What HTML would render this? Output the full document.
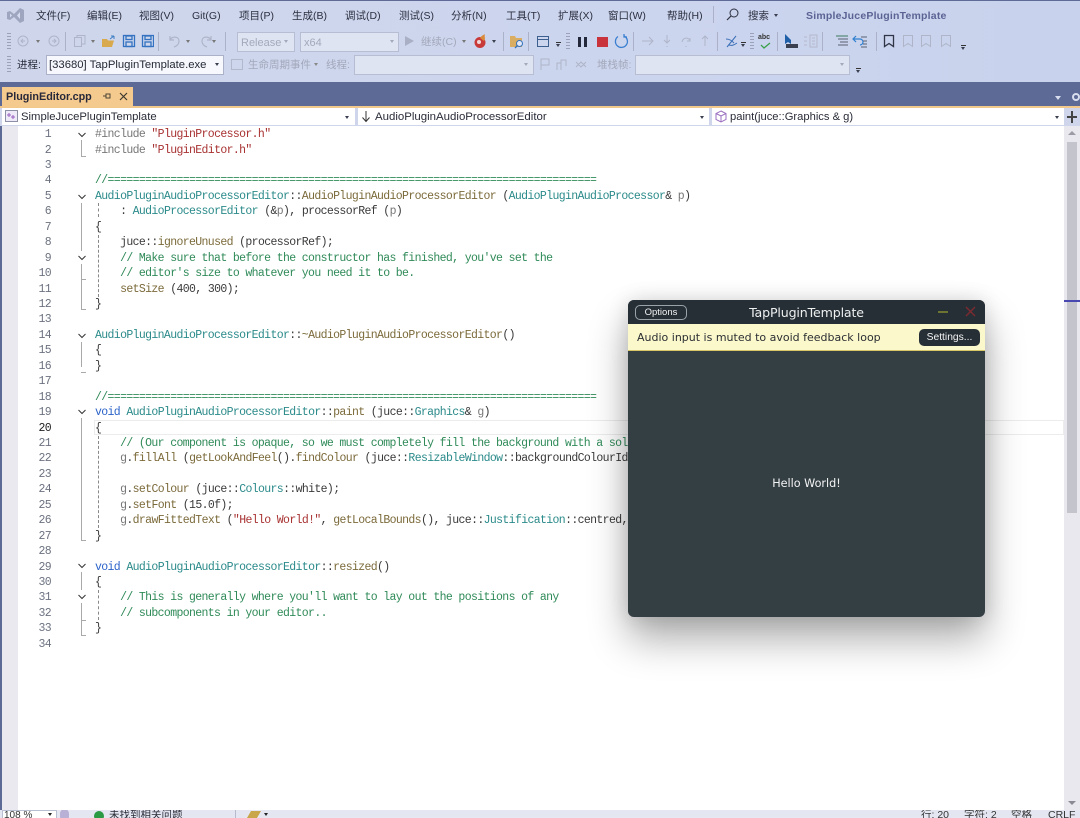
<!DOCTYPE html>
<html lang="zh"><head><meta charset="utf-8"><title>SimpleJucePluginTemplate</title>
<style>
html,body{margin:0;padding:0;width:1080px;height:818px;overflow:hidden;background:#fff}
body{position:relative;font-family:"Liberation Sans","Noto Sans CJK SC",sans-serif;color:#2a2d3a}
.a{position:absolute}
.m{position:absolute;top:9px;font-size:10.5px;line-height:14px;white-space:nowrap;color:#2c3040}
.t{position:absolute;white-space:nowrap;font-size:10.5px;line-height:14px}
.dis{color:#a3a9bb}
.box{position:absolute;box-sizing:border-box;border:1px solid #aeb5cc;background:#dfe4f2}
.caret{position:absolute;width:0;height:0;border-left:2.5px solid transparent;border-right:2.5px solid transparent;border-top:3px solid #3a3f50}
.caret.g{border-top-color:#a3a9bb}
.grip{position:absolute;width:4px;background:repeating-linear-gradient(#9aa1b8 0 1px,transparent 1px 3px)}
.sep{position:absolute;width:1px;background:#aab1c8}
.l{position:absolute;left:95px;white-space:pre;font-family:"Liberation Mono","DejaVu Sans Mono",monospace;font-size:11.5px;letter-spacing:-.635px;line-height:15px;color:#3a3a3a;transform:scaleY(1.08)}
.n{position:absolute;left:20px;width:31px;text-align:right;font-family:"Liberation Mono",monospace;font-size:11.5px;letter-spacing:-.66px;line-height:15px;color:#6c7280}
.c{color:#2f8a58}.k{color:#2b63c9}.s{color:#a83232}.y{color:#2b8a8a}.f{color:#7b6a3a}.p{color:#777}
.fold{position:absolute;left:78px;width:8px;height:8px}
.v{position:absolute;width:1px;background:#a9a9a9}
.d{position:absolute;left:98px;width:0;border-left:1px dashed #888}
.e{position:absolute;width:5px;height:1px;left:79px;background:#a9a9a9}
</style></head><body>

<!-- chrome background -->
<div class="a" style="left:0;top:0;width:1080px;height:82px;background:linear-gradient(90deg,#cfd6ec,#ccd5ee 60%,#c8d2ec)"></div>
<div class="a" style="left:0;top:0;width:1080px;height:1px;background:#5f6a96"></div>
<div class="a" style="left:0;top:82px;width:1080px;height:25px;background:#5d6a96"></div>
<div class="a" style="left:0;top:106px;width:1080px;height:2px;background:#f2c98a"></div>

<!-- VS logo -->
<svg class="a" style="left:6px;top:6px" width="20" height="19" viewBox="0 0 20 19"><path d="M1 6l3-1 4 3 6-6 4 2v11l-4 2-6-6-4 3-3-1z" fill="#9ea6bf"/><path d="M4 7.5v4l2-2zM14 6l-3 3.5 3 3.5z" fill="#d5dbef"/></svg>

<!-- menu -->
<span class="m" style="left:36px">文件(F)</span>
<span class="m" style="left:87px">编辑(E)</span>
<span class="m" style="left:139px">视图(V)</span>
<span class="m" style="left:192px">Git(G)</span>
<span class="m" style="left:239px">项目(P)</span>
<span class="m" style="left:292px">生成(B)</span>
<span class="m" style="left:345px">调试(D)</span>
<span class="m" style="left:399px">测试(S)</span>
<span class="m" style="left:451px">分析(N)</span>
<span class="m" style="left:506px">工具(T)</span>
<span class="m" style="left:558px">扩展(X)</span>
<span class="m" style="left:608px">窗口(W)</span>
<span class="m" style="left:667px">帮助(H)</span>
<div class="sep" style="left:713px;top:6px;height:17px"></div>
<svg class="a" style="left:725px;top:7px" width="15" height="15" viewBox="0 0 15 15"><circle cx="9" cy="6" r="4" fill="none" stroke="#2c3040"/><path d="M6 9l-4 4" stroke="#2c3040" stroke-width="1.2"/></svg>
<span class="m" style="left:748px">搜索</span><div class="caret" style="left:774px;top:14px"></div>
<span class="m" style="font-weight:bold;letter-spacing:.2px;color:#5b6394;font-size:10.5px;left:806px">SimpleJucePluginTemplate</span>

<!-- toolbar row 1 -->
<div class="grip" style="left:7px;top:33px;height:18px"></div>
<svg class="a" style="left:16px;top:34px" width="45" height="14" viewBox="0 0 45 14" fill="none" stroke="#aeb5c9"><circle cx="7" cy="7" r="5"/><path d="M9 7H5m2-2L5 7l2 2"/><circle cx="38" cy="7" r="5"/><path d="M36 7h4m-2-2 2 2-2 2"/></svg>
<div class="caret g" style="left:36px;top:40px;border-top-color:#777"></div>
<div class="sep" style="left:65px;top:32px;height:19px"></div>
<svg class="a" style="left:73px;top:34px" width="14" height="14" fill="none" stroke="#aeb5c9"><rect x="1.5" y="3.5" width="7" height="9"/><path d="M4 3V1.5h8V10h-3"/></svg>
<div class="caret" style="left:91px;top:40px;border-top-color:#777"></div>
<svg class="a" style="left:101px;top:34px" width="15" height="14"><path d="M1 5h5l1 1.5h6L11 13H1z" fill="#d9a94d"/><path d="M9 5l4-3m0 0h-3m3 0v3" stroke="#3f7fc4" fill="none"/></svg>
<svg class="a" style="left:122px;top:34px" width="32" height="14" fill="none" stroke="#3272c0" stroke-width="1.3"><rect x="1.5" y="1.5" width="11" height="11"/><rect x="4" y="2" width="6" height="3.5"/><rect x="4" y="8" width="6" height="4.5"/><rect x="20.5" y="1.5" width="11" height="11"/><rect x="23" y="2" width="6" height="3.5"/><rect x="23" y="8" width="6" height="4.5"/></svg>
<div class="sep" style="left:158px;top:32px;height:19px"></div>
<svg class="a" style="left:167px;top:34px" width="50" height="14" fill="none" stroke="#aeb5c9" stroke-width="1.2"><path d="M3 2v4h4M3 6c2-4 9-4 9 1 0 3-2 5-5 6"/><path d="M44 2v4h-4M44 6c-2-4-9-4-9 1 0 3 2 5 5 6"/></svg>
<div class="caret" style="left:186px;top:40px;border-top-color:#777"></div>
<div class="caret" style="left:212px;top:40px;border-top-color:#777"></div>
<div class="sep" style="left:225px;top:32px;height:19px"></div>
<div class="box" style="left:237px;top:32px;width:58px;height:20px;border-color:#b7bdd2"></div>
<span class="t dis" style="left:241px;top:35.5px;font-size:11px">Release</span><div class="caret g" style="left:284px;top:40px"></div>
<div class="box" style="left:300px;top:32px;width:99px;height:20px;border-color:#b7bdd2"></div>
<span class="t dis" style="left:304px;top:35.5px;font-size:11px">x64</span><div class="caret g" style="left:390px;top:40px"></div>
<div class="a" style="left:405px;top:36px;width:0;height:0;border-left:9px solid #a9b0c6;border-top:5.5px solid transparent;border-bottom:5.5px solid transparent"></div>
<span class="t dis" style="left:421px;top:35px">继续(C)</span><div class="caret" style="left:462px;top:40px;border-top-color:#777"></div>
<svg class="a" style="left:473px;top:33px" width="16" height="16"><circle cx="7" cy="9.5" r="5.5" fill="#c83a3a"/><path d="M7 5c2-3 4-3 5-4-1 3 1 4-1 7z" fill="#d98a3a"/><circle cx="6" cy="9" r="2" fill="#f2d7d7"/></svg>
<div class="caret" style="left:492px;top:40px"></div>
<div class="sep" style="left:503px;top:32px;height:19px"></div>
<svg class="a" style="left:509px;top:34px" width="16" height="15"><path d="M1 2h5l1 2h6v9H1z" fill="#d9ae62"/><circle cx="10.5" cy="9.5" r="3" fill="#e2e8f6" stroke="#3272c0"/><path d="M8.5 11.5 6 14" stroke="#3272c0" stroke-width="1.3"/></svg>
<div class="sep" style="left:528px;top:32px;height:19px"></div>
<svg class="a" style="left:536px;top:34px" width="14" height="14" fill="none" stroke="#3d5f8f"><rect x="1.5" y="2.5" width="11" height="10"/><path d="M1.5 5.500h11"/></svg>
<div class="caret" style="left:556px;top:44px"></div><div class="a" style="left:556px;top:42px;width:5px;height:1px;background:#333"></div>
<div class="grip" style="left:566px;top:33px;height:18px"></div>
<div class="a" style="left:578px;top:37px;width:3px;height:10px;background:#23283a"></div><div class="a" style="left:584px;top:37px;width:3px;height:10px;background:#23283a"></div>
<div class="a" style="left:597px;top:37px;width:11px;height:10px;background:#c8333c"></div>
<svg class="a" style="left:613px;top:33px" width="16" height="16" fill="none" stroke="#3a7fd0" stroke-width="1.3"><path d="M5 3.500A6 6 0 1 0 11 3M11 1v3H14"/></svg>
<div class="sep" style="left:633px;top:32px;height:19px"></div>
<svg class="a" style="left:641px;top:34px" width="76" height="14" fill="none" stroke="#aeb5c9"><path d="M1 7h11M8 3l4 4-4 4"/><path d="M26 1v8m-3-3 3 3 3-3M26 12v1"/><path d="M41 8c1-5 7-5 8-1m0-3v3h-3M45 12v1"/><path d="M64 12V2m-3 3 3-3 3 3"/></svg>
<div class="sep" style="left:717px;top:32px;height:19px"></div>
<svg class="a" style="left:724px;top:34px" width="16" height="14" fill="none" stroke="#3a6fb8"><path d="M3 13 12 2M2 5c4 0 6 2 8 4M5 11c3 1 5 0 8-2"/></svg>
<div class="caret" style="left:741px;top:44px"></div><div class="a" style="left:741px;top:42px;width:5px;height:1px;background:#333"></div>
<div class="grip" style="left:750px;top:33px;height:18px"></div>
<span class="t" style="left:758px;top:34px;font-size:7px;line-height:8px;font-weight:bold;color:#333">abc</span>
<svg class="a" style="left:760px;top:42px" width="12" height="7" fill="none" stroke="#3aa04a" stroke-width="1.3"><path d="M1 3l3 3 6-5"/></svg>
<div class="sep" style="left:777px;top:32px;height:19px"></div>
<svg class="a" style="left:783px;top:33px" width="16" height="16"><path d="M2 1v10l3-2 3 2V7z" fill="#1f5fa8"/><rect x="3" y="11" width="12" height="4" fill="#3a3f50"/></svg>
<svg class="a" style="left:803px;top:34px" width="16" height="14" fill="none" stroke="#b3b9cc"><path d="M7 1h7v12H7zM9 4h3M9 7h3M9 10h3M1 3h3M1 7h3M1 11h3"/></svg>
<div class="sep" style="left:822px;top:32px;height:19px"></div>
<svg class="a" style="left:835px;top:35px" width="14" height="13" fill="none" stroke-width="1"><path d="M1 1h12" stroke="#3a7a5a"/><path d="M3 4h10M5 7h8M3 10h10" stroke="#5a6074"/></svg>
<svg class="a" style="left:852px;top:34px" width="16" height="14" fill="none"><path d="M2 5h6a3 3 0 0 1 0 6M4 2 1 5l3 3" stroke="#2f7fce" stroke-width="1.2"/><path d="M9 3h6M11 7h4M11 10h4M9 13h6" stroke="#5a6074"/></svg>
<div class="sep" style="left:876px;top:32px;height:19px"></div>
<svg class="a" style="left:883px;top:34px" width="80" height="14" fill="none" stroke="#aeb5c9"><path d="M1.5 1.5h9v11l-4.500-3-4.500 3z" stroke="#2f3546" stroke-width="1.3"/><path d="M20.5 1.5h9v11l-4.500-3-4.500 3zM38.5 1.5h9v11l-4.500-3-4.500 3zM58.5 1.5h9v11l-4.500-3-4.500 3z"/></svg>
<div class="caret" style="left:961px;top:47px"></div><div class="a" style="left:961px;top:45px;width:5px;height:1px;background:#333"></div>

<!-- toolbar row 2 -->
<div class="grip" style="left:7px;top:56px;height:18px"></div>
<span class="t" style="left:17px;top:58px">进程:</span>
<div class="box" style="left:46px;top:55px;width:178px;height:20px;background:#f6f8fd;border-color:#aab1c8"></div>
<span class="t" style="left:49px;top:58px;font-size:11.3px;color:#252836">[33680] TapPluginTemplate.exe</span><div class="caret" style="left:215px;top:63px"></div>
<div class="a" style="left:231px;top:59px;width:10px;height:9px;border:1px solid #b3b9cc"></div>
<span class="t dis" style="left:248px;top:58px">生命周期事件</span><div class="caret g" style="left:314px;top:63px;border-top-color:#888"></div>
<span class="t dis" style="left:326px;top:58px">线程:</span>
<div class="box" style="left:354px;top:55px;width:180px;height:20px;border-color:#b7bdd2"></div><div class="caret g" style="left:524px;top:63px"></div>
<svg class="a" style="left:539px;top:57px" width="52" height="14" fill="none" stroke="#aeb5c9"><path d="M2 13V2h8v6H2M18 13V6h4v7M22 10V3h5v6M37 5l5 5 5-5M37 10l5-5 5 5"/></svg>
<span class="t dis" style="left:597px;top:58px">堆栈帧:</span>
<div class="box" style="left:635px;top:55px;width:215px;height:20px;border-color:#b7bdd2"></div><div class="caret g" style="left:840px;top:63px"></div>
<div class="caret" style="left:856px;top:70px"></div><div class="a" style="left:856px;top:68px;width:5px;height:1px;background:#333"></div>

<!-- doc tab -->
<div class="a" style="left:2px;top:87px;width:131px;height:20px;background:#f5ca8e"></div>
<span class="t" style="left:6px;top:90px;font-weight:bold;font-size:10.8px;color:#27293a">PluginEditor.cpp</span>
<svg class="a" style="left:102px;top:91px" width="10" height="10" fill="none" stroke="#4a4536"><path d="M1 5h3M4 2.500v5M4 3h4v4H4"/></svg>
<svg class="a" style="left:119px;top:92px" width="9" height="9" fill="none" stroke="#3b3a30" stroke-width="1.2"><path d="M1 1l7 7M8 1 1 8"/></svg>
<div class="caret" style="left:1055px;top:96px;border-top-color:#d9deee;border-left-width:3px;border-right-width:3px;border-top-width:4px"></div>
<svg class="a" style="left:1071px;top:92px" width="9" height="10"><circle cx="5" cy="5" r="3" fill="none" stroke="#d9deee" stroke-width="2"/></svg>

<!-- nav bar -->
<div class="a" style="left:0;top:108px;width:1080px;height:18px;background:#cfd6ec"></div>
<div class="a" style="left:2px;top:108px;width:353px;height:17px;background:#fff"></div>
<div class="a" style="left:358px;top:108px;width:351px;height:17px;background:#fff"></div>
<div class="a" style="left:712px;top:108px;width:352px;height:17px;background:#fff"></div>
<svg class="a" style="left:5px;top:110px" width="13" height="12"><rect x=".5" y=".5" width="12" height="11" fill="#efeaf7" stroke="#8c8fa5"/><path d="M4 3v4m-2-2h4M8 5v4M6 7h4" stroke="#9a5fc0"/></svg>
<span class="t" style="left:21px;top:110px;font-size:11.3px;color:#2a2c38">SimpleJucePluginTemplate</span><div class="caret" style="left:345px;top:116px"></div>
<svg class="a" style="left:361px;top:110px" width="10" height="13" fill="none" stroke="#333"><path d="M5 1v10M1.500 7.500 5 11.500l3.500-4"/></svg>
<span class="t" style="left:375px;top:110px;font-size:11.45px;color:#2a2c38">AudioPluginAudioProcessorEditor</span><div class="caret" style="left:700px;top:116px"></div>
<svg class="a" style="left:715px;top:110px" width="12" height="13" fill="none" stroke="#9a6fc0"><path d="M6 1l5 2.500v6L6 12 1 9.500v-6zM1 3.500 6 6l5-2.500M6 6v6"/></svg>
<span class="t" style="left:730px;top:110px;font-size:11.2px;color:#2a2c38">paint(juce::Graphics &amp; g)</span><div class="caret" style="left:1055px;top:116px"></div>
<svg class="a" style="left:1066px;top:110px" width="12" height="14"><path d="M6 1v12M1 7h10" stroke="#444" stroke-width="2"/></svg>

<!-- editor -->
<div class="a" style="left:0;top:126px;width:2px;height:692px;background:#5d6a96"></div>
<div class="a" style="left:2px;top:126px;width:16px;height:684px;background:#e9e9ef"></div>
<div class="a" style="left:1064px;top:126px;width:16px;height:684px;background:#e8e8ee"></div>
<div class="a" style="left:1067px;top:142px;width:10px;height:371px;background:#c3c4cc"></div>
<div class="a" style="left:1068px;top:131px;width:0;height:0;border-left:4px solid transparent;border-right:4px solid transparent;border-bottom:4px solid #9b9ba5"></div>
<div class="a" style="left:1068px;top:801px;width:0;height:0;border-left:4px solid transparent;border-right:4px solid transparent;border-top:4px solid #8a8a95"></div>
<div class="a" style="left:1064px;top:300px;width:16px;height:2px;background:#4848b0"></div>
<div class="a" style="left:94px;top:420px;width:968px;height:13px;border:1px solid #ececec"></div>

<!-- line numbers -->
<div class="n" style="top:127px">1</div><div class="n" style="top:142.5px">2</div><div class="n" style="top:158px">3</div><div class="n" style="top:173.4px">4</div><div class="n" style="top:188.8px">5</div><div class="n" style="top:204.3px">6</div><div class="n" style="top:219.7px">7</div><div class="n" style="top:235.2px">8</div><div class="n" style="top:250.6px">9</div><div class="n" style="top:266px">10</div><div class="n" style="top:281.5px">11</div><div class="n" style="top:297px">12</div><div class="n" style="top:312.4px">13</div><div class="n" style="top:327.8px">14</div><div class="n" style="top:343.3px">15</div><div class="n" style="top:358.7px">16</div><div class="n" style="top:374.2px">17</div><div class="n" style="top:389.6px">18</div><div class="n" style="top:405px">19</div><div class="n" style="top:420.5px;color:#222">20</div><div class="n" style="top:436px">21</div><div class="n" style="top:451.4px">22</div><div class="n" style="top:466.8px">23</div><div class="n" style="top:482.3px">24</div><div class="n" style="top:497.7px">25</div><div class="n" style="top:513.2px">26</div><div class="n" style="top:528.6px">27</div><div class="n" style="top:544px">28</div><div class="n" style="top:559.5px">29</div><div class="n" style="top:575px">30</div><div class="n" style="top:590.4px">31</div><div class="n" style="top:605.8px">32</div><div class="n" style="top:621.3px">33</div><div class="n" style="top:636.7px">34</div>

<!-- fold markers -->
<svg class="fold" style="top:131px" viewBox="0 0 8 8" fill="none" stroke="#333"><path d="M.5 2 4 5.500 7.500 2"/></svg>
<svg class="fold" style="top:193px" viewBox="0 0 8 8" fill="none" stroke="#333"><path d="M.5 2 4 5.500 7.500 2"/></svg>
<svg class="fold" style="top:254px" viewBox="0 0 8 8" fill="none" stroke="#333"><path d="M.5 2 4 5.500 7.500 2"/></svg>
<svg class="fold" style="top:332px" viewBox="0 0 8 8" fill="none" stroke="#333"><path d="M.5 2 4 5.500 7.500 2"/></svg>
<svg class="fold" style="top:408px" viewBox="0 0 8 8" fill="none" stroke="#333"><path d="M.5 2 4 5.500 7.500 2"/></svg>
<svg class="fold" style="top:562px" viewBox="0 0 8 8" fill="none" stroke="#333"><path d="M.5 2 4 5.500 7.500 2"/></svg>
<svg class="fold" style="top:593px" viewBox="0 0 8 8" fill="none" stroke="#333"><path d="M.5 2 4 5.500 7.500 2"/></svg>
<div class="v" style="left:81px;top:140px;height:16px"></div><div class="e" style="left:81px;top:156px"></div>
<div class="v" style="left:81px;top:203px;height:48px"></div>
<div class="v" style="left:81px;top:264px;height:45px"></div><div class="e" style="left:81px;top:279px"></div><div class="e" style="left:81px;top:309px"></div>
<div class="v" style="left:81px;top:342px;height:25px"></div><div class="e" style="left:81px;top:372px"></div>
<div class="v" style="left:81px;top:418px;height:122px"></div><div class="e" style="left:81px;top:540px"></div>
<div class="v" style="left:81px;top:572px;height:18px"></div>
<div class="v" style="left:81px;top:603px;height:33px"></div><div class="e" style="left:81px;top:620px"></div><div class="e" style="left:81px;top:635px"></div>
<div class="d" style="top:203px;height:14px"></div><div class="d" style="top:235px;height:62px"></div>
<div class="d" style="top:436px;height:92px"></div><div class="d" style="top:590px;height:30px"></div>

<!-- code -->
<div class="l p" style="top:127px">#include <span class="s">"PluginProcessor.h"</span></div>
<div class="l p" style="top:142.5px">#include <span class="s">"PluginEditor.h"</span></div>
<div class="l c" style="top:173.4px">//==============================================================================</div>
<div class="l" style="top:188.8px"><span class="y">AudioPluginAudioProcessorEditor</span>::<span class="f">AudioPluginAudioProcessorEditor</span> (<span class="y">AudioPluginAudioProcessor</span>&amp; <span class="p">p</span>)</div>
<div class="l" style="top:204.3px">    : <span class="y">AudioProcessorEditor</span> (&amp;<span class="p">p</span>), processorRef (<span class="p">p</span>)</div>
<div class="l" style="top:219.7px">{</div>
<div class="l" style="top:235.2px">    juce::<span class="f">ignoreUnused</span> (processorRef);</div>
<div class="l c" style="top:250.6px">    // Make sure that before the constructor has finished, you've set the</div>
<div class="l c" style="top:266px">    // editor's size to whatever you need it to be.</div>
<div class="l" style="top:281.5px">    <span class="f">setSize</span> (400, 300);</div>
<div class="l" style="top:297px">}</div>
<div class="l" style="top:327.8px"><span class="y">AudioPluginAudioProcessorEditor</span>::<span class="f">~AudioPluginAudioProcessorEditor</span>()</div>
<div class="l" style="top:343.3px">{</div>
<div class="l" style="top:358.7px">}</div>
<div class="l c" style="top:389.6px">//==============================================================================</div>
<div class="l" style="top:405px"><span class="k">void</span> <span class="y">AudioPluginAudioProcessorEditor</span>::<span class="f">paint</span> (juce::<span class="y">Graphics</span>&amp; <span class="p">g</span>)</div>
<div class="l" style="top:420.5px">{</div>
<div class="l c" style="top:436px">    // (Our component is opaque, so we must completely fill the background with a sol</div>
<div class="l" style="top:451.4px">    <span class="p">g</span>.<span class="f">fillAll</span> (<span class="f">getLookAndFeel</span>().<span class="f">findColour</span> (juce::<span class="y">ResizableWindow</span>::backgroundColourId</div>
<div class="l" style="top:482.3px">    <span class="p">g</span>.<span class="f">setColour</span> (juce::<span class="y">Colours</span>::white);</div>
<div class="l" style="top:497.7px">    <span class="p">g</span>.<span class="f">setFont</span> (15.0f);</div>
<div class="l" style="top:513.2px">    <span class="p">g</span>.<span class="f">drawFittedText</span> (<span class="s">"Hello World!"</span>, <span class="f">getLocalBounds</span>(), juce::<span class="y">Justification</span>::centred,</div>
<div class="l" style="top:528.6px">}</div>
<div class="l" style="top:559.5px"><span class="k">void</span> <span class="y">AudioPluginAudioProcessorEditor</span>::<span class="f">resized</span>()</div>
<div class="l" style="top:575px">{</div>
<div class="l c" style="top:590.4px">    // This is generally where you'll want to lay out the positions of any</div>
<div class="l c" style="top:605.8px">    // subcomponents in your editor..</div>
<div class="l" style="top:621.3px">}</div>

<!-- plugin window -->
<div class="a" style="left:628px;top:300px;width:357px;height:317px;border-radius:6px;background:#343f44;box-shadow:0 22px 40px rgba(0,0,0,.33),0 0 20px rgba(0,0,0,.13)"></div>
<div class="a" style="left:628px;top:300px;width:357px;height:317px;border-radius:6px;overflow:hidden">
  <div class="a" style="left:0;top:0;width:357px;height:24px;background:#262f36"></div>
  <div class="a" style="left:7px;top:5px;width:52px;height:15px;box-sizing:border-box;border:1px solid #9aa4a8;border-radius:5px;color:#f4f4f4;font-size:9.5px;line-height:13px;text-align:center">Options</div>
  <div class="a" style="left:0;top:5px;width:357px;text-align:center;color:#eef0f0;font-family:'DejaVu Sans',sans-serif;font-size:12.6px;line-height:15px;letter-spacing:-.15px">TapPluginTemplate</div>
  <div class="a" style="left:310px;top:11px;width:10px;height:2px;background:#6d7330"></div>
  <svg class="a" style="left:337px;top:6px" width="11" height="11" fill="none" stroke="#7a2b30" stroke-width="1.5"><path d="M1 1l9 9M10 1 1 10"/></svg>
  <div class="a" style="left:0;top:24px;width:357px;height:26px;background:#fbf8cc;border-bottom:1px solid #d8c766"></div>
  <div class="a" style="left:9px;top:30px;color:#2b2f33;font-family:'DejaVu Sans',sans-serif;font-size:11px;line-height:16px;white-space:nowrap">Audio input is muted to avoid feedback loop</div>
  <div class="a" style="left:291px;top:29px;width:61px;height:17px;border-radius:5px;background:#262f36;color:#f4f4f4;font-size:10.3px;line-height:17px;text-align:center">Settings...</div>
  <div class="a" style="left:0;top:176px;width:357px;text-align:center;color:#f4f4f4;font-family:'DejaVu Sans',sans-serif;font-size:11.2px;line-height:15px">Hello World!</div>
</div>

<!-- status bar -->
<div class="a" style="left:0;top:810px;width:1080px;height:8px;background:#e4e7f2;overflow:hidden">
  <div class="a" style="left:2px;top:0;width:53px;height:10px;background:#fff;border:1px solid #b9bfd2"></div>
  <span class="t" style="left:4px;top:-1px;font-size:10px;color:#333">108 %</span>
  <div class="caret" style="left:48px;top:3px;border-top-color:#222"></div>
  <div class="a" style="left:60px;top:-1px;width:9px;height:12px;border-radius:6px;background:#b9b0d6"></div>
  <div class="a" style="left:94px;top:1px;width:10px;height:10px;border-radius:5px;background:#2b9a45"></div>
  <span class="t" style="left:109px;top:-2px;font-size:10.5px;color:#2a2c38">未找到相关问题</span>
  <div class="a" style="left:235px;top:0;width:1px;height:8px;background:#b5bacc"></div>
  <div class="a" style="left:249px;top:1px;width:10px;height:7px;background:#c9a64a;transform:skewX(-30deg)"></div>
  <div class="caret" style="left:264px;top:3px;border-top-color:#222"></div>
  <span class="t" style="left:921px;top:-2px;color:#333">行: 20</span>
  <span class="t" style="left:964px;top:-2px;color:#333">字符: 2</span>
  <span class="t" style="left:1011px;top:-2px;color:#333">空格</span>
  <span class="t" style="left:1048px;top:-2px;color:#333">CRLF</span>
</div>
</body></html>
